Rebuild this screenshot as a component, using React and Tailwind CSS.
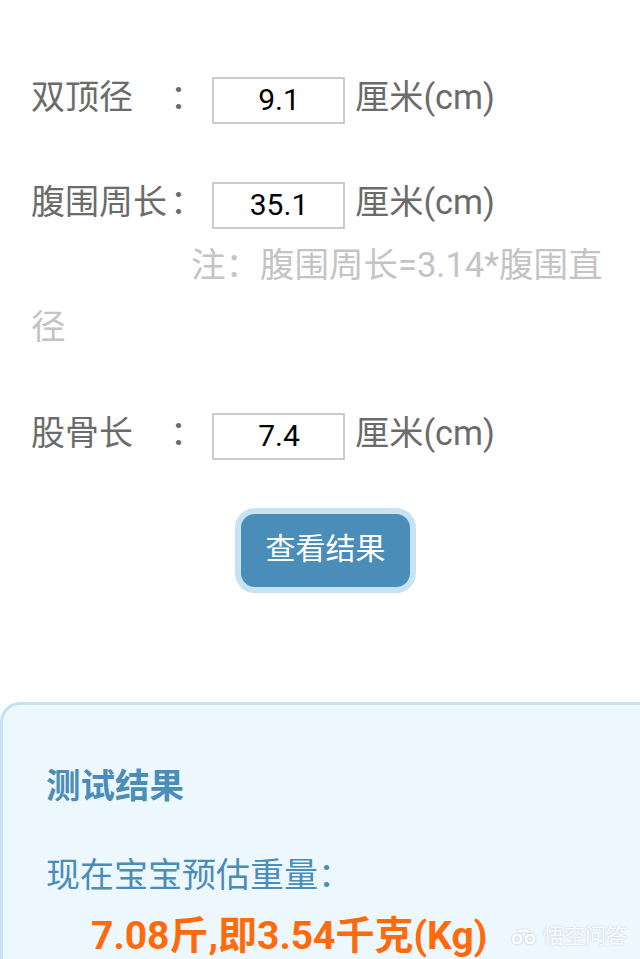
const cjk = "font-['Roboto','Noto_Sans_CJK_SC',sans-serif]";

const Row = ({ label, value, className }) => (
  <div className={"flex items-center h-[47px] " + className}>
    <div className="w-[181px] flex whitespace-nowrap pb-[6px]">
      <span className="w-[139px]">{label}</span>
      <span>：</span>
    </div>
    <input
      readOnly
      value={value}
      className="w-[133px] h-[47px] border-2 border-[#cccccc] bg-white text-center text-[30px] text-black outline-none pb-[3px] pl-[1px]"
    />
    <span className="ml-[10px] pb-[6px] whitespace-nowrap text-[34.2px]">厘米(cm)</span>
  </div>
);

const App = () => {
  return (
    <div className={"relative w-[640px] h-[959px] overflow-hidden bg-white text-[34px] text-[#6b6b6b] " + cjk}>
      <div className="pt-[77px] pl-[31px] pr-[31px]">
        <Row label="双顶径" value="9.1" />
        <Row label="腹围周长" value="35.1" className="mt-[58px]" />
        <p className="mt-[5px] text-[#c4c4c4] text-[34.5px] leading-[62px] indent-[160px]">注：腹围周长=3.14*腹围直径</p>
        <Row label="股骨长" value="7.4" className="mt-[55px]" />
        <div className="flex justify-center mt-[48px] pl-[11px]">
          <button className="w-[181px] h-[85px] rounded-[20px] border-[6px] border-[#c6e2f3] bg-[#4a8db8] text-[30px] text-white pb-[5px]">
            查看结果
          </button>
        </div>
      </div>
      <div className="mt-[109px] h-[300px] rounded-tl-[20px] border-l-[3px] border-t-[3px] border-[#c6e1f1] bg-[#ecf7fe] pl-[43px] pt-[57px] text-[#4a8db8]">
        <h2 className="text-[34.5px] font-bold leading-[48px]">测试结果</h2>
        <p className="mt-[41px] leading-[48px]">现在宝宝预估重量：</p>
        <p className="mt-[13px] pl-[45px] whitespace-nowrap text-[39px] font-bold leading-[48px] text-[#ff6a0a]">7.08斤,即3.54千克(Kg)</p>
      </div>
      <div className="absolute left-[510px] top-[926px] flex items-center gap-[6px] text-[21px] leading-none text-white/90 [text-shadow:0_0_2px_rgba(110,110,110,0.35)]">
        <svg width="27" height="16" viewBox="0 0 27 16" fill="none" stroke="#ffffff" strokeWidth="2.5" className="drop-shadow-[0_0_1px_rgba(110,110,110,0.4)]">
          <circle cx="7" cy="10" r="4" />
          <circle cx="20" cy="10" r="4" />
          <path d="M8 3c3-2 8-2 11 0" />
        </svg>
        <span className="whitespace-nowrap">悟空问答</span>
      </div>
    </div>
  );
};

export default App;
